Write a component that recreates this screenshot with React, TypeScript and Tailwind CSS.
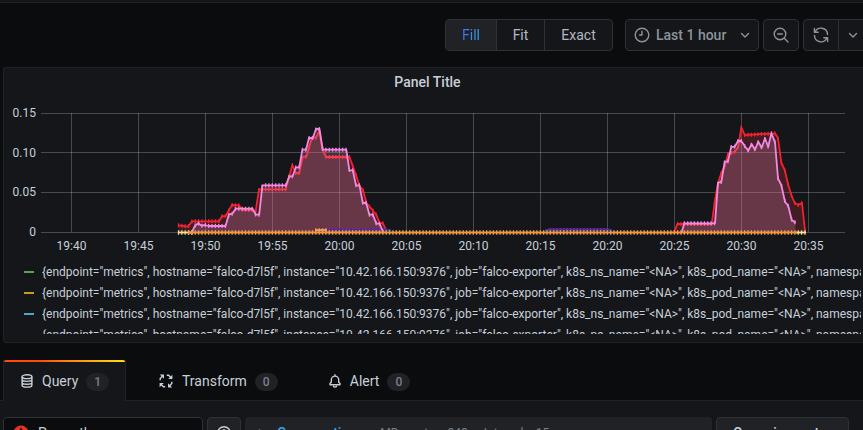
import React from "react";

type Point = [number, number];

const BASE = 232;
const STEP = 3.35;
const START = 178.5;

const redA: Point[] = [
  [178.5, 225.3], [188, 226.7], [192, 221.3], [219, 221.3], [222, 216.2], [225.6, 216], [232, 205],
  [239, 205.3], [242.3, 210], [252.3, 210], [255.6, 211.7], [259, 189.3], [285.7, 189.3], [292.4, 165],
  [295.7, 173], [299.3, 173], [302.7, 156.7], [306.3, 156.7], [312, 137.7], [316, 137.7], [319.3, 131],
  [322.7, 150], [326, 157], [349.5, 157], [356, 175], [359.6, 186], [363, 190], [366.5, 203.3],
  [370, 207], [376.5, 215], [379.5, 223], [383, 223.3], [386.3, 231],
];
const redB: Point[] = [
  [674.3, 232], [677.3, 224], [711.7, 224], [714.7, 202], [718, 183], [721.3, 173], [724.6, 166.7],
  [728, 154], [735, 151.7], [738.3, 146.7], [741.3, 127.3], [744.7, 135], [775, 133.3], [778, 138],
  [781.3, 162.7], [784.7, 170], [788, 184], [791.3, 195], [794.7, 203], [798.3, 205], [802, 203], [805, 231],
];
const pinkA: Point[] = [
  [192, 232], [195, 225.7], [198.3, 223.3], [201.7, 225.7], [205, 225], [208.5, 226], [225.5, 226],
  [229, 214.3], [232.3, 213.7], [235.7, 208.7], [252.5, 208.7], [255.7, 214.7], [259.2, 214.7],
  [262.4, 185.3], [286, 185.3], [289.2, 176.3], [292.6, 176.3], [295.8, 167.3], [299.2, 167.3],
  [302.4, 149.7], [306, 149.7], [309, 138], [312.8, 138], [316, 129], [319.5, 129], [322.7, 149.7],
  [346.3, 149.7], [349.4, 170.3], [352.8, 170.3], [356, 185.3], [359.5, 185.3], [362.8, 203],
  [366.2, 203], [369.4, 214.7], [372.8, 214.7], [376.3, 223.7], [379.6, 223.7], [383, 232],
];
const pinkB: Point[] = [
  [681.7, 232], [684.3, 223.3], [715, 223.3], [718, 182.7], [721.3, 182], [724.7, 161.7], [728, 161.3],
  [731.2, 147], [734.7, 146.7], [738, 141], [741.3, 141], [744.7, 146], [748.3, 150.7], [751.7, 144],
  [755, 149.7], [758.3, 141.7], [761.7, 147.7], [765, 138.3], [768.2, 146.7], [771.4, 133.3],
  [775, 142.3], [778, 178.3], [781.3, 185], [785, 201.7], [788.3, 206], [791.7, 220], [795.5, 222.7],
];

const line = (pts: Point[]) => "M" + pts.map((p) => p.join(" ")).join("L");
const area = (pts: Point[]) =>
  `${line(pts)}L${pts[pts.length - 1][0]} ${BASE}L${pts[0][0]} ${BASE}Z`;

function valueAt(pts: Point[], x: number) {
  for (let i = 1; i < pts.length; i++) {
    const [x0, y0] = pts[i - 1];
    const [x1, y1] = pts[i];
    if (x <= x1) return y0 + ((y1 - y0) * (x - x0)) / (x1 - x0);
  }
  return pts[pts.length - 1][1];
}

// One short vertical marker for every sample of a series
function markers(pts: Point[], size: number) {
  let d = "";
  for (let i = 0; i < 188; i++) {
    const x = START + i * STEP;
    if (x < pts[0][0] - 0.1 || x > pts[pts.length - 1][0] + 0.1) continue;
    d += `M${x.toFixed(2)} ${(valueAt(pts, x) - size).toFixed(2)}v${size * 2}`;
  }
  return d;
}

const flat = (a: number, b: number, y: number): Point[] => [[a, y], [b, y]];

function Series({ pts, color, tick = color, width = 1.8, size = 2 }: {
  pts: Point[]; color: string; tick?: string; width?: number; size?: number;
}) {
  return (
    <g fill="none" stroke={color}>
      <path d={markers(pts, size)} stroke={tick} strokeWidth={1.3} />
      <path d={line(pts)} strokeWidth={width} strokeLinejoin="round" />
    </g>
  );
}

const times = ["19:40", "19:45", "19:50", "19:55", "20:00", "20:05", "20:10", "20:15", "20:20", "20:25", "20:30", "20:35"];

function Chart() {
  return (
    <div className="pr-[18px]">
      <div className="flex text-xs leading-4 text-[#c7d0d9]">
        <div className="-mt-2 flex h-[135px] w-8 shrink-0 flex-col justify-between text-right">
          <span>0.15</span>
          <span>0.10</span>
          <span>0.05</span>
          <span>0</span>
        </div>
        <svg
          className="ml-[5px] h-[124px] min-w-0 flex-1 overflow-visible"
          viewBox="41 113 804 124"
          preserveAspectRatio="none"
          role="img"
          aria-label="Time series"
        >
          <g stroke="#fff" strokeOpacity="0.22">
            {[113.5, 152.5, 192.5, 232.5].map((y) => <path key={y} d={`M41 ${y}H845`} />)}
            {times.map((t, i) => <path key={t} d={`M${71.5 + i * 67} 113V232`} />)}
          </g>
          <g fill="#f2364a" fillOpacity="0.2">
            <path d={area(redA)} />
            <path d={area(redB)} />
          </g>
          <Series pts={redA} color="#f2232f" />
          <Series pts={redB} color="#f2232f" />
          <g fill="#ff9bd2" fillOpacity="0.21">
            <path d={area(pinkA)} />
            <path d={area(pinkB)} />
          </g>
          <Series pts={flat(382, 391, 230)} color="#1f4a9c" size={1} />
          <Series pts={flat(545, 612, 230)} color="#1f3f94" size={1} />
          <Series pts={flat(325, 386, 229.5)} color="#5a2791" tick="#7a3fc0" size={1.5} />
          <Series pts={flat(548, 609, 229.5)} color="#5a2791" tick="#7a3fc0" size={1.5} />
          <Series pts={pinkA} color="#f288e0" />
          <Series pts={pinkB} color="#f288e0" />
          <Series pts={flat(315, 327, 230)} color="#f2a05c" size={1.8} />
          <Series pts={flat(178, 192, 232.5)} color="#ffe28a" tick="#e8d9a0" size={2.3} />
          <Series pts={flat(796, 806, 232.5)} color="#ffe28a" tick="#e8d9a0" size={2.3} />
          <Series pts={flat(188, 797, 232.5)} color="#ff9433" tick="#dba878" width={2.2} size={2.3} />
        </svg>
      </div>
      <div className="-mt-0.5 ml-[34px] mr-[3px] grid grid-cols-12 text-center text-xs leading-4 text-[#c7d0d9]">
        {times.map((t) => <span key={t}>{t}</span>)}
      </div>
    </div>
  );
}

const legendText =
  '{endpoint="metrics", hostname="falco-d7l5f", instance="10.42.166.150:9376", job="falco-exporter", k8s_ns_name="<NA>", k8s_pod_name="<NA>", namespace="falco"}';
const legendColors = ["bg-[#56a64b]", "bg-[#c2a01c]", "bg-[#4aa9bd]", "bg-[#cf661c]"];

function Chevron() {
  return (
    <svg width="10" height="10" viewBox="0 0 10 10" fill="none" stroke="currentColor" strokeWidth="1.4" strokeLinecap="round" strokeLinejoin="round" aria-hidden="true">
      <path d="M1.5 3.5L5 7l3.5-3.5" />
    </svg>
  );
}

const toolButton = "flex h-8 items-center border border-[#2c3235] bg-[#141619] text-[#8e9399]";

function Toolbar() {
  return (
    <div className="flex h-16 shrink-0 items-center justify-end">
      <div className="mr-3 flex h-8 rounded-sm border border-[#2c3235] bg-[#141619] text-sm text-[#b4b7c4]">
        <button className="w-[50px] bg-[#202226] text-[#33a2e5]"><span className="bg-gradient-to-r from-[#3f6df5] to-[#33a2e5] bg-clip-text text-transparent">Fill</span></button>
        <button className="w-12 border-l border-[#2c3235]">Fit</button>
        <button className="w-[68px] border-l border-[#2c3235]">Exact</button>
      </div>
      <button className={`${toolButton} mr-1 w-[134px] rounded-sm px-2 text-sm font-medium`}>
        <svg width="16" height="16" viewBox="0 0 16 16" fill="none" stroke="currentColor" strokeWidth="1.4" strokeLinecap="round" strokeLinejoin="round" aria-hidden="true">
          <circle cx="8" cy="8" r="6.8" />
          <path d="M8 4.2V8H5.600" />
        </svg>
        <span className="ml-1.5 flex-1 whitespace-nowrap text-left">Last 1 hour</span>
        <Chevron />
      </button>
      <button className={`${toolButton} mr-1 w-9 justify-center rounded-sm`} aria-label="Zoom out">
        <svg width="16" height="16" viewBox="0 0 16 16" fill="none" stroke="currentColor" strokeWidth="1.4" strokeLinecap="round" aria-hidden="true">
          <circle cx="7" cy="7" r="5.8" />
          <path d="M4.7 7h4.6M11.3 11.3L15 15" />
        </svg>
      </button>
      <button className={`${toolButton} w-9 justify-center rounded-l-sm`} aria-label="Refresh">
        <svg width="16" height="16" viewBox="0 0 16 16" fill="none" stroke="currentColor" strokeWidth="1.4" strokeLinecap="round" strokeLinejoin="round" aria-hidden="true">
          <path d="M1.4 1.5v3.8h3.8M2 5.2A6.5 6.5 0 0 1 14.5 7.5M14.6 14.5v-3.8h-3.8M14 10.8A6.5 6.5 0 0 1 1.5 8.5" />
        </svg>
      </button>
      <button className="flex h-8 w-6 items-center justify-center border-y border-[#2c3235] bg-[#141619] pl-1 text-[#8e9399]" aria-label="Refresh interval">
        <Chevron />
      </button>
    </div>
  );
}

function DatabaseIcon() {
  return (
    <svg width="12" height="14" viewBox="0 0 12 14" fill="none" stroke="currentColor" strokeWidth="1.4" aria-hidden="true">
      <ellipse cx="6" cy="2.7" rx="4.9" ry="1.9" />
      <path d="M1.1 2.7v8.5c0 1 2.2 1.9 4.9 1.9s4.9-.9 4.9-1.9V2.7M1.1 5.6c0 1 2.2 1.8 4.9 1.8s4.9-.8 4.9-1.8M1.1 8.4c0 1 2.2 1.8 4.9 1.8s4.9-.8 4.9-1.8" />
    </svg>
  );
}

function TransformIcon() {
  return (
    <svg width="14" height="14" viewBox="0 0 14 14" fill="none" stroke="currentColor" strokeWidth="1.4" aria-hidden="true">
      <path d="M1.2 6.2V4.5L3.600 2M7.8 1.2h1.7L12 3.600M12.8 7.8v1.7L10.4 12M6.2 12.8H4.5L2 10.4" />
      <path d="M.8.6h4.200v4.200zM13.4.8v4.200H9.200zM13.2 13.4H9V9.200zM.6 13.2V9h4.200z" fill="currentColor" stroke="none" />
    </svg>
  );
}

function BellIcon() {
  return (
    <svg width="12" height="14" viewBox="0 0 12 14" fill="none" stroke="currentColor" strokeWidth="1.4" strokeLinecap="round" strokeLinejoin="round" aria-hidden="true">
      <path d="M6 .8v1.3M2.3 8.3V5.8a3.7 3.7 0 0 1 7.4 0v2.5L11 9.6v1.2H1V9.6zM4.5 12.4c.5 1 2.5 1 3 0" />
    </svg>
  );
}

function Tab({ icon, label, count, active, className }: {
  icon: React.ReactNode; label: string; count: number; active?: boolean; className: string;
}) {
  return (
    <button
      role="tab"
      aria-selected={!!active}
      className={`relative flex h-[41px] items-center text-sm text-[#c7d0d9] ${className} ${active ? "-mb-px border-x border-[#202226] bg-[#141619]" : ""}`}
    >
      {active && <span className="absolute inset-x-0 top-0 h-0.5 rounded-t-sm bg-gradient-to-r from-[#ff4a0c] from-30% to-[#fade0a]" />}
      {icon}
      <span className="ml-[9px]">{label}</span>
      <span className="ml-2 mt-0.5 flex h-[18px] w-[23px] items-center justify-center rounded-full bg-[#202226] text-xs font-medium text-[#7b8087]">{count}</span>
    </button>
  );
}

export default function App() {
  return (
    <main className="flex h-screen flex-col overflow-hidden bg-[#0b0c0e] font-['Roboto',sans-serif]">
      <div className="h-[3px] shrink-0 border-b border-[#202226] bg-[#141619]" />
      <Toolbar />
      <section className="ml-[3px] h-[276px] shrink-0 rounded-l-[3px] border-y border-l border-[#202226] bg-[#141619]">
        <h1 className="pb-[19px] pr-3 pt-0.5 text-center text-sm font-medium leading-6 text-[#c7d0d9]">Panel Title</h1>
        <Chart />
        <ul className="mr-0.5 mt-[7px] h-[73px] overflow-hidden text-xs text-[#c7d0d9]">
          {legendColors.map((c) => (
            <li key={c} className="flex h-[21px] items-center whitespace-nowrap pl-5">
              <span className={`mr-2 h-0.5 w-[10px] shrink-0 ${c}`} />
              {legendText}
            </li>
          ))}
        </ul>
      </section>
      <div role="tablist" className="mt-[17px] flex h-[41px] shrink-0 border-b border-[#202226] pl-[3px]">
        <Tab icon={<DatabaseIcon />} label="Query" count={1} active className="w-[123px] pl-[17px]" />
        <Tab icon={<TransformIcon />} label="Transform" count={0} className="pl-[33px]" />
        <Tab icon={<BellIcon />} label="Alert" count={0} className="pl-[51px]" />
      </div>
      <div className="flex min-h-[60px] shrink-0 gap-1 bg-[#141619] pl-[3px] pr-[14px] pt-4 text-sm text-[#c7d0d9]">
        <label className="flex h-8 w-[200px] items-center rounded-sm border border-[#2c3235] bg-[#0b0c0e] pl-[9px]">
          <svg width="16" height="16" viewBox="0 0 16 16" aria-hidden="true">
            <circle cx="8" cy="8" r="7.5" fill="#e6331c" />
            <path d="M8 2.2c.6 2 2 2.600 1.900 4.200l1.200-1c.3 2-.6 2.800-.6 3.600h-5c0-.8-.9-1.600-.6-3.600l1.200 1C6 4.800 7.400 4.200 8 2.200zM5 10h6v1H5zM6.500 12h3c-.4 1-2.600 1-3 0z" fill="#0b0c0e" />
          </svg>
          <select aria-label="Data source" className="ml-[9px] flex-1 appearance-none bg-transparent outline-none">
            <option>Prometheus</option>
          </select>
        </label>
        <button aria-label="Help" className="flex h-8 w-[34px] items-center justify-center rounded-sm border border-[#2c3235] bg-[#202226]">
          <svg width="14" height="14" viewBox="0 0 14 14" fill="none" stroke="currentColor" strokeWidth="1.4" strokeLinecap="round" aria-hidden="true">
            <circle cx="7" cy="7" r="6.200" />
            <path d="M5.200 5.500a1.800 1.800 0 1 1 1.800 2V8M7 10.200v.1" />
          </svg>
        </button>
        <button className="flex h-8 flex-1 items-center rounded-sm bg-[#202226] pl-3 text-left">
          <svg width="8" height="10" viewBox="0 0 8 10" fill="none" stroke="#7b8087" strokeWidth="1.4" aria-hidden="true">
            <path d="M2 1.500L5.500 5 2 8.500" />
          </svg>
          <span className="ml-3 font-medium text-[#33a2e5]">Query options</span>
          <span className="ml-4 text-xs text-[#7b8087]">MD = auto = 848</span>
          <span className="ml-4 text-xs text-[#7b8087]">Interval = 15s</span>
        </button>
        <button className="h-8 w-[133px] rounded-sm border border-[#2c3235] bg-[#202226] font-medium">Query inspector</button>
      </div>
    </main>
  );
}
